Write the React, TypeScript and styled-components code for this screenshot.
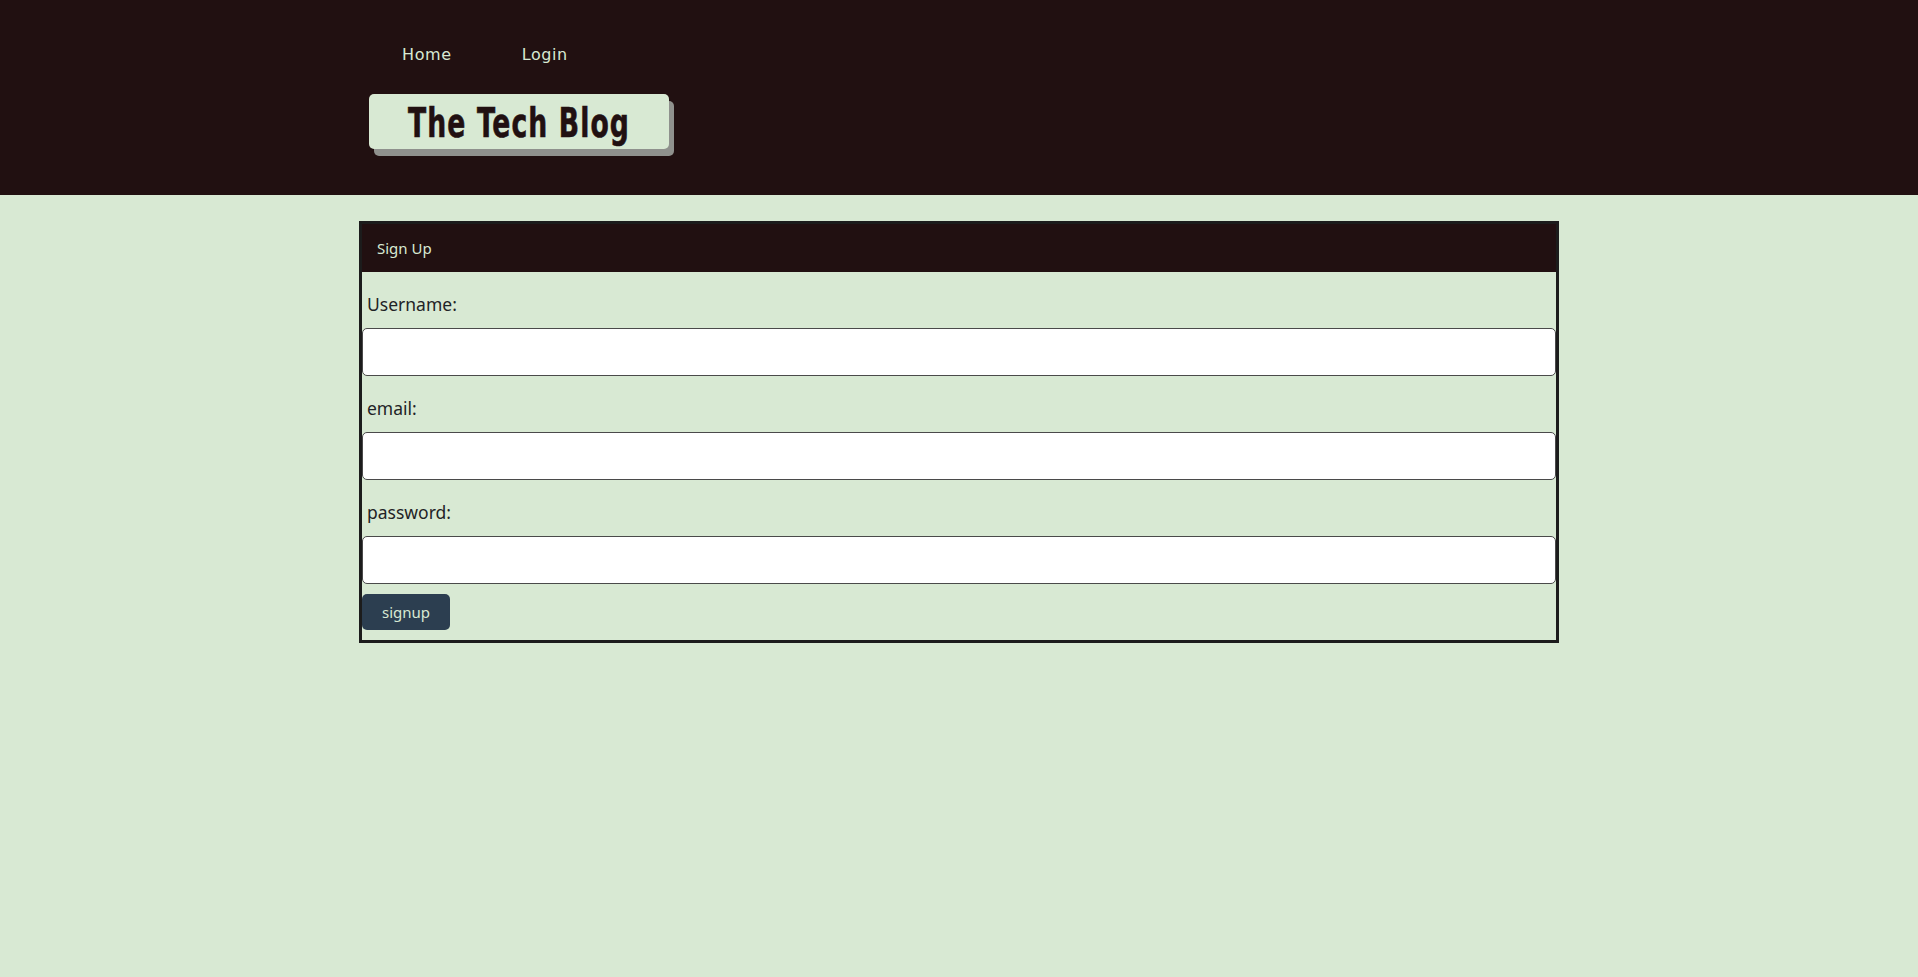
import React from "react";
import styled, { createGlobalStyle } from "styled-components";

const GlobalStyle = createGlobalStyle`
  html, body {
    margin: 0;
    padding: 0;
    background: #d8e9d3;
  }
  body {
    font-family: "Noto Sans", "Open Sans", sans-serif;
    color: #212529;
  }
  * { box-sizing: border-box; }
`;

const Header = styled.header`
  background: #211011;
  height: 195px;
`;

const HeaderInner = styled.div`
  width: 1200px;
  margin: 0 auto;
  padding: 45px 10px 0 10px;
  display: flex;
  flex-direction: column;
  align-items: flex-start;
`;

const Nav = styled.nav`
  display: flex;
  gap: 70px;
  padding-left: 33px;
`;

const NavLink = styled.a`
  font-family: "DejaVu Sans", Verdana, sans-serif;
  font-size: 16px;
  line-height: 20px;
  letter-spacing: 0.6px;
  color: #d8e9d3;
  text-decoration: none;
`;

const TitleBox = styled.div`
  margin-top: 29px;
  width: 300px;
  height: 55px;
  background: #d8e9d3;
  border-radius: 5px;
  box-shadow: 5px 7px 0 #8f918d;
  display: flex;
  align-items: center;
  justify-content: center;
  overflow: hidden;
`;

const Title = styled.h1`
  margin: 0;
  font-family: Impact, "DejaVu Sans Condensed", "DejaVu Sans", sans-serif;
  font-weight: 700;
  font-size: 40px;
  letter-spacing: 1.5px;
  color: #211011;
  line-height: 1;
  padding-top: 3px;
  white-space: nowrap;
  transform: scaleX(0.74);
  -webkit-text-stroke: 0.6px #211011;
`;

const Main = styled.main`
  display: flex;
  justify-content: center;
  padding-top: 26px;
`;

const Card = styled.section`
  width: 1200px;
  border: 3px solid #1c1c1c;
`;

const CardHeader = styled.div`
  background: #211011;
  height: 48px;
  display: flex;
  align-items: center;
  padding-left: 15px;
  color: #d8e9d3;
  font-size: 15px;
`;

const Form = styled.form`
  display: flex;
  flex-direction: column;
  align-items: flex-start;
  padding-bottom: 10px;
`;

const Label = styled.label`
  display: block;
  font-size: 17.5px;
  line-height: 24px;
  margin: 20px 0 12px 5px;
  color: #1f2326;
`;

const Input = styled.input`
  width: 100%;
  height: 48px;
  border: 1px solid #4a4a4a;
  border-radius: 5px;
  background: #fff;
  font-size: 16px;
  padding: 0 10px;
`;

const Button = styled.button`
  margin-top: 10px;
  width: 88px;
  height: 36px;
  border: none;
  border-radius: 5px;
  background: #2c3e50;
  color: #d8e9d3;
  font-family: "Noto Sans", sans-serif;
  font-size: 15px;
  cursor: pointer;
`;

export default function App() {
  return (
    <>
      <GlobalStyle />
      <Header>
        <HeaderInner>
          <Nav>
            <NavLink href="#">Home</NavLink>
            <NavLink href="#">Login</NavLink>
          </Nav>
          <TitleBox>
            <Title>The Tech Blog</Title>
          </TitleBox>
        </HeaderInner>
      </Header>
      <Main>
        <Card>
          <CardHeader>Sign Up</CardHeader>
          <Form onSubmit={(e) => e.preventDefault()}>
            <Label htmlFor="username">Username:</Label>
            <Input id="username" type="text" />
            <Label htmlFor="email">email:</Label>
            <Input id="email" type="email" />
            <Label htmlFor="password">password:</Label>
            <Input id="password" type="password" />
            <Button type="submit">signup</Button>
          </Form>
        </Card>
      </Main>
    </>
  );
}
